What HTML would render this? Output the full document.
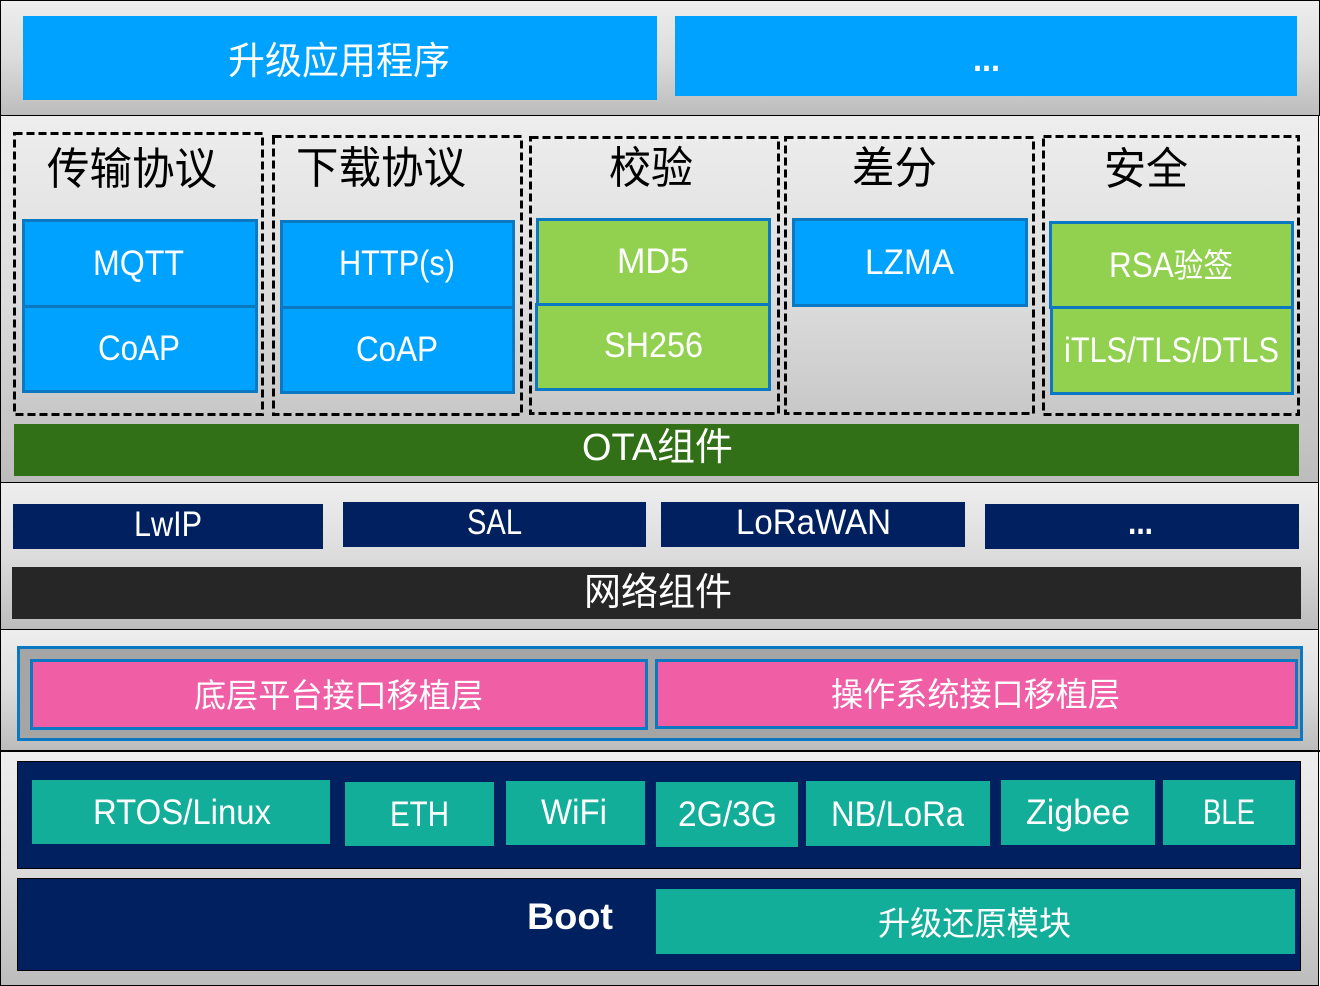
<!DOCTYPE html>
<html lang="zh"><head><meta charset="utf-8"><title>OTA</title>
<style>
html,body{margin:0;padding:0;background:#fff;width:1320px;height:986px;overflow:hidden}
svg{display:block}
text{font-family:"Liberation Sans","Noto Sans CJK SC",sans-serif;fill:#fff;font-size:35px}
.c{font-family:"Noto Sans CJK SC","Liberation Sans",sans-serif}
.k{fill:#000;font-size:44px}
.s{font-size:33px}
.m{font-size:38px}
.d{font-weight:700}
rect{shape-rendering:crispEdges}
</style></head><body>
<svg width="1320" height="986" viewBox="0 0 1320 986" xmlns="http://www.w3.org/2000/svg">
<defs><linearGradient id="g" x1="0" y1="0" x2="0" y2="1"><stop offset="0" stop-color="#eeeeee"/><stop offset=".5" stop-color="#dcdcdc"/><stop offset="1" stop-color="#bcbcbc"/></linearGradient></defs>

<!-- bands -->
<rect x="0.5" y="0.5" width="1319" height="115" fill="url(#g)" stroke="#000"/>
<rect x="0.5" y="115.5" width="1318" height="367" fill="url(#g)" stroke="#000"/>
<rect x="0.5" y="482.5" width="1318" height="147" fill="url(#g)" stroke="#000"/>
<rect x="0.5" y="629.5" width="1318" height="121" fill="url(#g)" stroke="#000"/>
<rect x="0.5" y="750.5" width="1318" height="235" fill="url(#g)" stroke="#000"/>
<rect x="0" y="750" width="1320" height="2" fill="#000"/>

<!-- top -->
<rect x="23" y="16" width="634" height="84" fill="#00a2ff"/>
<rect x="675" y="16" width="622" height="80" fill="#00a2ff"/>
<text class="c m" x="228" y="74" textLength="222" lengthAdjust="spacingAndGlyphs">升级应用程序</text>
<text class="d" x="973" y="71" textLength="27" lengthAdjust="spacingAndGlyphs">...</text>

<!-- dashed groups -->
<g fill="none" stroke="#000" stroke-width="3" stroke-dasharray="8 4">
<rect x="14.5" y="133.5" width="248" height="281"/>
<rect x="273.5" y="136.5" width="248" height="278"/>
<rect x="530.5" y="137.5" width="248" height="276"/>
<rect x="785.5" y="137.5" width="248" height="276"/>
<rect x="1043.5" y="136.5" width="255" height="278"/>
</g>
<text class="c k" x="47" y="184" textLength="170" lengthAdjust="spacingAndGlyphs">传输协议</text>
<text class="c k" x="296" y="183" textLength="170" lengthAdjust="spacingAndGlyphs">下载协议</text>
<text class="c k" x="609" y="183" textLength="84" lengthAdjust="spacingAndGlyphs">校验</text>
<text class="c k" x="852" y="183" textLength="85" lengthAdjust="spacingAndGlyphs">差分</text>
<text class="c k" x="1104" y="184" textLength="84" lengthAdjust="spacingAndGlyphs">安全</text>

<!-- cards -->
<g stroke="#0b78c1" stroke-width="3">
<rect x="23.5" y="220.5" width="233" height="86" fill="#00a2ff"/>
<rect x="23.5" y="306.5" width="233" height="85" fill="#00a2ff"/>
<rect x="281.5" y="221.5" width="232" height="86" fill="#00a2ff"/>
<rect x="281.5" y="307.5" width="232" height="85" fill="#00a2ff"/>
<rect x="537.5" y="219.5" width="232" height="85" fill="#92d050"/>
<rect x="536.5" y="304.5" width="233" height="85" fill="#92d050"/>
<rect x="793.5" y="219.5" width="233" height="86" fill="#00a2ff"/>
<rect x="1050.5" y="222.5" width="242" height="85" fill="#92d050"/>
<rect x="1051.5" y="307.5" width="241" height="86" fill="#92d050"/>
</g>
<text x="93" y="275" textLength="91" lengthAdjust="spacingAndGlyphs">MQTT</text>
<text x="98" y="360" textLength="82" lengthAdjust="spacingAndGlyphs">CoAP</text>
<text x="339" y="275" textLength="116" lengthAdjust="spacingAndGlyphs">HTTP(s)</text>
<text x="356" y="361" textLength="82" lengthAdjust="spacingAndGlyphs">CoAP</text>
<text x="617" y="273" textLength="72" lengthAdjust="spacingAndGlyphs">MD5</text>
<text x="604" y="357" textLength="99" lengthAdjust="spacingAndGlyphs">SH256</text>
<text x="865" y="274" textLength="89" lengthAdjust="spacingAndGlyphs">LZMA</text>
<text x="1109" y="277" textLength="124" lengthAdjust="spacingAndGlyphs">RSA<tspan class="c" style="font-size:33px">验签</tspan></text>
<text x="1064" y="362" textLength="215" lengthAdjust="spacingAndGlyphs">iTLS/TLS/DTLS</text>

<!-- OTA bar -->
<rect x="14" y="424" width="1285" height="52" fill="#317016"/>
<text class="m" x="582" y="460" textLength="151" lengthAdjust="spacingAndGlyphs">OTA<tspan class="c">组件</tspan></text>

<!-- network -->
<rect x="13" y="504" width="310" height="45" fill="#002060"/>
<rect x="343" y="502" width="303" height="45" fill="#002060"/>
<rect x="661" y="502" width="304" height="45" fill="#002060"/>
<rect x="985" y="504" width="314" height="45" fill="#002060"/>
<text x="134" y="536" textLength="68" lengthAdjust="spacingAndGlyphs">LwIP</text>
<text x="467" y="534" textLength="55" lengthAdjust="spacingAndGlyphs">SAL</text>
<text x="736" y="534" textLength="155" lengthAdjust="spacingAndGlyphs">LoRaWAN</text>
<text class="d" x="1128" y="534" textLength="25" lengthAdjust="spacingAndGlyphs">...</text>
<rect x="12" y="567" width="1289" height="52" fill="#262626"/>
<text class="c m" x="584" y="605" textLength="148" lengthAdjust="spacingAndGlyphs">网络组件</text>

<!-- porting -->
<rect x="18.5" y="647.5" width="1283" height="92" fill="#a5a5a5" stroke="#0b78c1" stroke-width="3"/>
<rect x="31.5" y="660.5" width="615" height="68" fill="#f05fa6" stroke="#0b78c1" stroke-width="3"/>
<rect x="656.5" y="660.5" width="640" height="67" fill="#f05fa6" stroke="#0b78c1" stroke-width="3"/>
<text class="c s" x="194" y="707" textLength="289" lengthAdjust="spacingAndGlyphs">底层平台接口移植层</text>
<text class="c s" x="831" y="706" textLength="289" lengthAdjust="spacingAndGlyphs">操作系统接口移植层</text>

<!-- bottom -->
<rect x="17.5" y="761.5" width="1283" height="107" fill="#002060" stroke="#000"/>
<rect x="17.5" y="878.5" width="1283" height="92" fill="#002060" stroke="#000"/>
<g fill="#13ae9a">
<rect x="32" y="780" width="298" height="64"/>
<rect x="345" y="782" width="149" height="64"/>
<rect x="506" y="781" width="139" height="64"/>
<rect x="656" y="782" width="142" height="65"/>
<rect x="806" y="781" width="184" height="65"/>
<rect x="1001" y="780" width="154" height="65"/>
<rect x="1163" y="780" width="132" height="65"/>
<rect x="656" y="889" width="639" height="65"/>
</g>
<text x="93" y="824" textLength="178" lengthAdjust="spacingAndGlyphs">RTOS/Linux</text>
<text x="390" y="826" textLength="59" lengthAdjust="spacingAndGlyphs">ETH</text>
<text x="541" y="824" textLength="66" lengthAdjust="spacingAndGlyphs">WiFi</text>
<text x="678" y="826" textLength="99" lengthAdjust="spacingAndGlyphs">2G/3G</text>
<text x="831" y="826" textLength="133" lengthAdjust="spacingAndGlyphs">NB/LoRa</text>
<text x="1026" y="824" textLength="104" lengthAdjust="spacingAndGlyphs">Zigbee</text>
<text x="1203" y="824" textLength="52" lengthAdjust="spacingAndGlyphs">BLE</text>
<text x="527" y="929" textLength="86" lengthAdjust="spacingAndGlyphs" style="font-weight:700;font-size:37px">Boot</text>
<text class="c s" x="878" y="935" textLength="193" lengthAdjust="spacingAndGlyphs">升级还原模块</text>
</svg>
</body></html>
